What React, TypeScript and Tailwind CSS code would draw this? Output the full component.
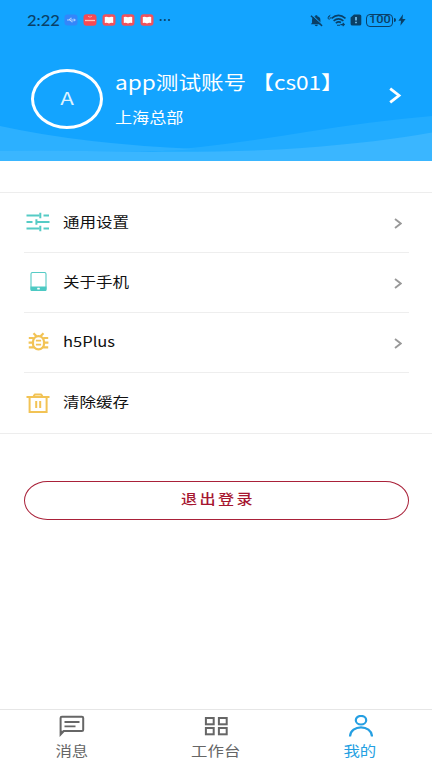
import type { ReactNode } from "react";
import clsx from "clsx";

type LabelProps = {
  children: ReactNode;
  className?: string;
};

// Wide lettering, each caller picks its own stretch
function Label({ children, className }: LabelProps) {
  return (
    <span className={clsx("inline-block whitespace-nowrap", className)}>
      {children}
    </span>
  );
}

function BookBadge() {
  return (
    <svg width="14" height="12" viewBox="0 0 14 12">
      <rect x="0.5" y="0.3" width="13" height="11.4" rx="3" fill="#f0525c" />
      <path d="M2.8 3Q5 2.2 7 3.2Q9 2.2 11.2 3V9Q9 8.4 7 9.4Q5 8.4 2.8 9Z" fill="#fff" />
    </svg>
  );
}

function StatusBar() {
  return (
    <div className="flex h-10 items-center justify-between pl-[27px] pr-[26px] text-[#0a4067]">
      <div className="flex items-center gap-[5px]">
        <span className="w-8 font-[Lato,sans-serif] text-[15px] font-medium leading-none">
          <Label className="origin-left scale-x-[1.1]">2:22</Label>
        </span>
        <svg width="14" height="12" viewBox="0 0 14 12">
          <rect x="0.5" y="0.5" width="13" height="11" rx="3" fill="#3486fa" />
          <path
            d="M3 6h7.5M5 6l1.5-1.8h1.2M6 6l1.5 1.8h1.2M9.8 4.8l1.6 1.2-1.6 1.2"
            fill="none"
            stroke="#d5e8ff"
            strokeWidth="0.8"
          />
        </svg>
        <svg width="14" height="12" viewBox="0 0 14 12">
          <rect x="0.5" y="0.3" width="13" height="11.4" rx="3" fill="#f54a54" />
          <path d="M5 2.2q2 2 4 0" fill="none" stroke="#ffb2ac" strokeWidth="0.8" />
          <path d="M2 6.5h10" stroke="#ffc5bd" strokeWidth="1.3" />
        </svg>
        <BookBadge />
        <BookBadge />
        <BookBadge />
        <svg width="12" height="4" viewBox="0 0 12 4" fill="currentColor">
          <circle cx="1.6" cy="2" r="1.1" />
          <circle cx="5.8" cy="2" r="1.1" />
          <circle cx="10" cy="2" r="1.1" />
        </svg>
      </div>
      <div className="flex items-center gap-1">
        <svg width="13" height="13" viewBox="0 0 14 13">
          <path d="M2.2 9V6Q2.2 2.4 5.8 1.9V.8h2v1.1Q11.2 2.5 11.2 6v3l1.3 1.5H.9Z" fill="currentColor" />
          <path d="M5 11.2h3.6q-.3 1.5-1.8 1.5T5 11.2Z" fill="currentColor" />
          <path d="M2 .4l11.5 11" stroke="#13a4ff" strokeWidth="1.2" />
          <path d="M1 1.3l12 11" stroke="currentColor" strokeWidth="1.5" />
        </svg>
        <svg width="19" height="13" viewBox="0 0 19 13" fill="none" stroke="currentColor">
          <path d="M3.4 1.2Q1 2 1 4a1.2 1.2 0 1 0 .4-1" strokeWidth="0.9" />
          <path d="M4.5 4.3q7-5.8 14 0" strokeWidth="1.6" />
          <path d="M6.6 6.8q4.9-4 9.8 0" strokeWidth="1.6" />
          <path d="M8.8 9.1q2.7-2.2 5.2-.6" strokeWidth="1.6" />
          <path d="M10 11.3h3M13.4 10.6h3.8M15.7 9l1.6 1.6-1.6 1.6" strokeWidth="1.1" />
        </svg>
        <svg width="12" height="12" viewBox="0 0 12 12">
          <path d="M4 .4h5.5q1.800 0 1.800 1.700v7.800q0 1.700-1.800 1.700h-7Q.6 11.600.6 9.900V3.400Z" fill="currentColor" />
          <path d="M6 3v3.600M6 7.800v1.500" stroke="#79c9f8" strokeWidth="1.600" />
        </svg>
        <div className="flex items-center">
          <span className="flex h-[13px] w-[27px] items-center justify-center rounded-[4px] border border-current font-[Roboto,sans-serif] text-[10.5px] font-medium leading-none">
            <Label className="mt-px scale-x-[1.22]">100</Label>
          </span>
          <span className="ml-px h-1 w-[2px] rounded-r bg-current" />
        </div>
        <svg className="-ml-[2px]" width="8" height="12" viewBox="0 0 8 12">
          <path d="M5 .3L.4 6.7h2.6L2.4 11.700 7.600 5H4.500Z" fill="currentColor" />
        </svg>
      </div>
    </div>
  );
}

function Waves() {
  return (
    <svg className="absolute inset-0" width="432" height="161" viewBox="0 0 432 161">
      <path d="M150 152Q222 146 306 132Q374 121 432 116V161H150Z" fill="#22acff" />
      <path d="M0 126Q82 144 196 149Q170 151 140 151.5H0Z" fill="#2cb0ff" />
      <path d="M0 151Q60 150.5 130 151.5Q230 153 302 148Q380 142 432 132.5V161H0Z" fill="#3ab6ff" />
    </svg>
  );
}

function Header() {
  return (
    <header className="relative h-[160.5px] overflow-hidden bg-[#13a4ff]">
      <Waves />
      <div className="relative">
        <StatusBar />
        <div className="flex pl-[31px] pt-[29px] text-white">
          <div className="flex h-[60px] w-[72px] items-center justify-center rounded-[50%] border-[3px] border-white text-[17px] text-[#dcf2ff]">
            <Label className="-mt-[2px] scale-x-[1.32]">A</Label>
          </div>
          <div className="ml-[12px] flex w-[257px] flex-col items-start">
            <Label className="origin-left scale-x-[1.19] text-[19px] leading-[26px]">app测试账号 【cs01】</Label>
            <Label className="mt-[12px] origin-left scale-x-[1.18] text-[14.5px] leading-[20px]">上海总部</Label>
          </div>
          <svg className="mt-[17.5px] ml-[16px]" width="14" height="17" viewBox="0 0 14 17">
            <path d="M2.2 1.7l8.8 6.8-8.8 6.8" fill="none" stroke="currentColor" strokeWidth="2.8" />
          </svg>
        </div>
      </div>
    </header>
  );
}

function SettingsIcon() {
  return (
    <svg width="24" height="20" viewBox="0 0 24 20" fill="none" stroke="#55cbc5" strokeWidth="2">
      <path d="M.5 3.5h13M17.5 3.5h5.5M.5 10h6M10 10h13.5M.5 16.5h13M17.5 16.5h5.5" />
      <path d="M14.3.8v5.4M10.400 7.300v5.400M14.300 13.800v5.400" />
    </svg>
  );
}

function PhoneIcon() {
  return (
    <svg width="24" height="20" viewBox="0 0 24 20">
      <rect x="5" y=".5" width="15" height="18" rx="1.5" fill="none" stroke="#55cbc5" strokeWidth="1.1" />
      <path d="M4.5 14.500h16v3.500q0 1-1.200 1H5.700q-1.200 0-1.200-1Z" fill="#4cc9c3" />
      <rect x="11.200" y="15.800" width="2.600" height="1.800" rx=".5" fill="#fff" />
    </svg>
  );
}

function BugIcon() {
  return (
    <svg width="24" height="20" viewBox="0 0 24 20" fill="none" stroke="#f2c355" strokeWidth="2.2">
      <rect x="7" y="4.200" width="11" height="13.200" rx="5.500" />
      <path d="M7.500 1.300l3 3M17.500 1.300l-3 3M2.800 6h5M17.200 6h5M2.600 10.700h4.400M18 10.700h4.400M2.800 15.300h5M17.200 15.300h5" />
      <path d="M9.900 8.700h5.200M9.900 12.700h5.200" strokeWidth="1.800" />
    </svg>
  );
}

function TrashIcon() {
  return (
    <svg width="24" height="22" viewBox="0 0 24 22" fill="none" stroke="#f2c355" strokeWidth="2">
      <path d="M.5 5h23M3.600 5v15h17V5" />
      <path d="M7.500 4.200L9 2.500h6L16.500 4.200" />
      <path d="M10.200 9v7M14.200 9v7" />
    </svg>
  );
}

const items = [
  { label: "通用设置", icon: <SettingsIcon />, arrow: true },
  { label: "关于手机", icon: <PhoneIcon />, arrow: true },
  { label: "h5Plus", icon: <BugIcon />, arrow: true },
  { label: "清除缓存", icon: <TrashIcon />, arrow: false },
];

function MenuList() {
  return (
    <ul className="mt-[31.5px] h-[242px] border-y border-[#ededed] pl-6 pr-[23px]">
      {items.map((item, index) => (
        <li
          key={item.label}
          className={clsx(
            "flex h-[60px] items-center pb-px pl-[2px] pr-[7.5px]",
            index < items.length - 1 && "border-b border-[#eeeeee]"
          )}
        >
          {item.icon}
          <Label className="ml-[12.5px] -mt-[3px] origin-left scale-x-[1.18] text-[14px] leading-5 text-[#111]">
            {item.label}
          </Label>
          {item.arrow && (
            <svg className="mt-[3px] ml-auto" width="8" height="11" viewBox="0 0 8 11">
              <path d="M1 1l5.8 4.5L1 10" fill="none" stroke="#999" strokeWidth="1.9" />
            </svg>
          )}
        </li>
      ))}
    </ul>
  );
}

const tabs = [
  {
    label: "消息",
    active: false,
    icon: (
      <svg width="26" height="22" viewBox="0 0 26 22" fill="none" stroke="currentColor" strokeWidth="2">
        <path d="M1.6 19.5V3q0-1.3 1.3-1.3h20q1.3 0 1.3 1.3v11.8q0 1.3-1.3 1.3H4.8Z" />
        <path d="M1 15.5v5l4-4.4Z" fill="currentColor" stroke="none" />
        <path d="M5.5 7h15M5.5 11.300h11" strokeWidth="1.800" />
      </svg>
    ),
  },
  {
    label: "工作台",
    active: false,
    icon: (
      <svg width="26" height="22" viewBox="0 0 26 22" fill="none" stroke="currentColor" strokeWidth="2">
        <rect x="2.900" y="3" width="7.800" height="6.300" />
        <rect x="15.900" y="3" width="7.800" height="6.300" />
        <rect x="2.900" y="13" width="7.800" height="6.300" />
        <rect x="15.900" y="13" width="7.800" height="6.300" />
      </svg>
    ),
  },
  {
    label: "我的",
    active: true,
    icon: (
      <svg width="26" height="22" viewBox="0 0 26 22" fill="none" stroke="currentColor" strokeWidth="2.200">
        <ellipse cx="14" cy="5.200" rx="5.200" ry="4.300" />
        <path d="M3 21.500C3.500 9.300 24.500 9.300 25 21.500" />
      </svg>
    ),
  },
];

function TabBar() {
  return (
    <nav className="mt-auto flex h-[59px] border-t border-[#e6e6e6]">
      {tabs.map((tab) => (
        <button
          key={tab.label}
          className={clsx(
            "flex flex-1 flex-col items-center pt-[5px]",
            tab.active ? "text-[#259fe2]" : "text-[#666]"
          )}
        >
          {tab.icon}
          <Label className="mt-[3px] scale-x-[1.19] text-[13.8px] leading-5">{tab.label}</Label>
        </button>
      ))}
    </nav>
  );
}

export default function App() {
  return (
    <div className="flex h-[768px] w-[432px] flex-col overflow-hidden bg-white font-['Noto_Sans_CJK_SC',sans-serif]">
      <Header />
      <MenuList />
      <button className="mx-6 mr-[23px] mt-[47px] flex h-[39px] items-center justify-center rounded-[24px/20px] border border-[#a92139] text-[#a61630]">
        <Label className="-mt-[4px] ml-[2px] scale-x-[1.19] text-[13.5px] font-medium tracking-[2px]">退出登录</Label>
      </button>
      <TabBar />
    </div>
  );
}
